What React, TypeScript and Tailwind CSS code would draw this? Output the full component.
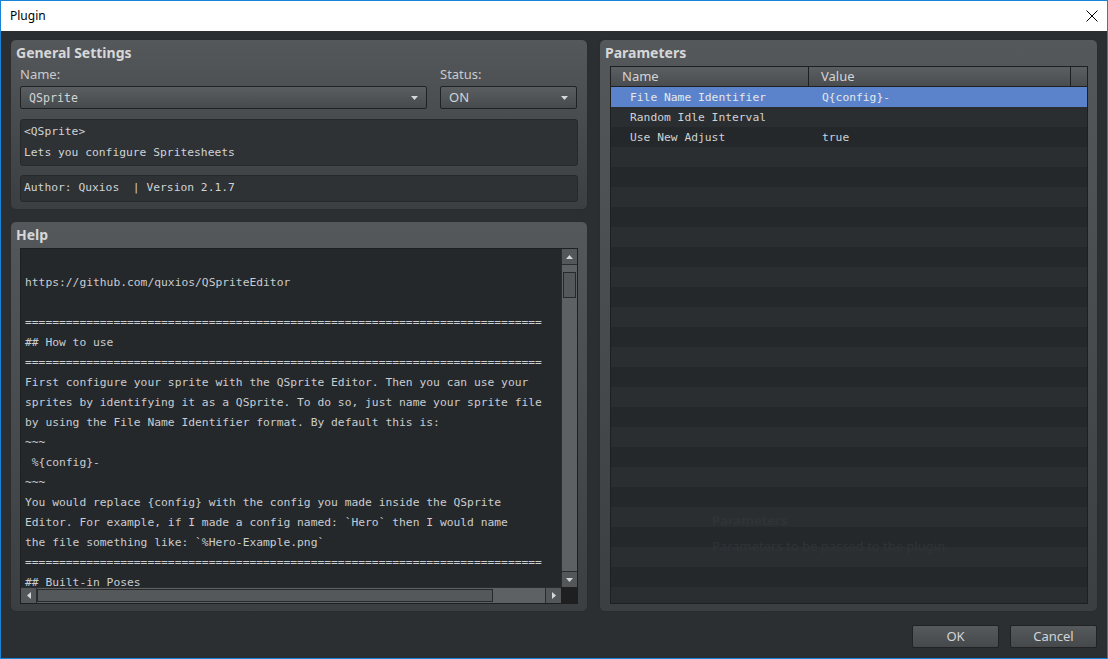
import React from 'react';

const helpLines = [
  '',
  'https://github.com/quxios/QSpriteEditor',
  '',
  '============================================================================',
  '## How to use',
  '============================================================================',
  'First configure your sprite with the QSprite Editor. Then you can use your',
  'sprites by identifying it as a QSprite. To do so, just name your sprite file',
  'by using the File Name Identifier format. By default this is:',
  '~~~',
  ' %{config}-',
  '~~~',
  'You would replace {config} with the config you made inside the QSprite',
  'Editor. For example, if I made a config named: `Hero` then I would name',
  'the file something like: `%Hero-Example.png`',
  '============================================================================',
  '## Built-in Poses',
  '',
];

const params = [
  { name: 'File Name Identifier', value: 'Q{config}-' },
  { name: 'Random Idle Interval', value: '' },
  { name: 'Use New Adjust', value: 'true' },
];

function Arrow({ dir }: { dir: 'up' | 'down' | 'left' | 'right' }) {
  const pts = {
    up: '0,4 3.5,0 7,4',
    down: '0,0 7,0 3.5,4',
    left: '4,0 4,7 0,3.5',
    right: '0,0 0,7 4,3.5',
  }[dir];
  const w = dir === 'up' || dir === 'down' ? 7 : 4;
  const h = dir === 'up' || dir === 'down' ? 4 : 7;
  return (
    <svg width={w} height={h} viewBox={`0 0 ${w} ${h}`}>
      <polygon points={pts} fill="#d4d6d8" />
    </svg>
  );
}

function Combo({ value, mono, width }: { value: string; mono?: boolean; width: string }) {
  return (
    <div
      className={`${width} h-[23px] rounded-[2px] border border-[#1f2123] bg-gradient-to-b from-[#5b5e61] to-[#474a4d] flex items-center justify-between pl-[8px] pr-[8px] text-[#d2d4d6]`}
    >
      <span className={mono ? "pt-[3px] font-['DejaVu_Sans_Mono',monospace] text-[11.6px]" : 'text-[13px]'}>{value}</span>
      <Arrow dir="down" />
    </div>
  );
}

function Panel({ title, className, children }: { title: string; className: string; children: React.ReactNode }) {
  return (
    <div
      className={`${className} rounded-[6px] border border-[#2a2c2e] bg-gradient-to-b from-[#55585b] to-[#3c3f42] flex flex-col`}
    >
      <div className="pt-[4px] pl-[5px] h-[22px] leading-[18px] text-[14px] font-bold text-[#d6d7d8]">{title}</div>
      {children}
    </div>
  );
}

export default function App() {
  return (
    <div className="w-[1108px] h-[659px] border border-[#1883d7] bg-[#2c2f32] flex flex-col overflow-hidden font-['Noto_Sans',sans-serif]">
      {/* title bar */}
      <div className="h-[30px] shrink-0 bg-white flex items-center justify-between pl-[9px] pr-[9px] text-[12px] text-black">
        <span>Plugin</span>
        <svg width="12" height="12" viewBox="0 0 12 12">
          <path d="M0.5 0.5 L11.5 11.5 M11.5 0.5 L0.5 11.5" stroke="#000" strokeWidth="1" />
        </svg>
      </div>

      <div className="flex-1 flex flex-col px-[9px] pt-[8px]">
        <div className="flex gap-[11px] h-[573px]">
          {/* left column */}
          <div className="w-[578px] flex flex-col gap-[11px]">
            <Panel title="General Settings" className="h-[171px]">
              <div className="px-[9px] flex flex-col">
                <div className="mt-[4px] flex gap-[13px] h-[16px] leading-[16px] text-[13px] text-[#c9cbcd]">
                  <span className="w-[407px]">Name:</span>
                  <span>Status:</span>
                </div>
                <div className="flex gap-[13px] mt-[4px]">
                  <Combo value="QSprite" mono width="w-[407px]" />
                  <Combo value="ON" width="w-[137px]" />
                </div>
                <div className="mt-[10px] h-[47px] rounded-[3px] border border-[#26282a] bg-[#2f3235] px-[3px] pt-[1px] font-['DejaVu_Sans_Mono',monospace] text-[11.3px] leading-[21px] text-[#cfd2d5]">
                  <div>&lt;QSprite&gt;</div>
                  <div>Lets you configure Spritesheets</div>
                </div>
                <div className="mt-[9px] h-[27px] rounded-[3px] border border-[#26282a] bg-[#2f3235] px-[3px] flex items-center font-['DejaVu_Sans_Mono',monospace] text-[11.3px] text-[#cfd2d5] whitespace-pre">
                  Author: Quxios  | Version 2.1.7
                </div>
              </div>
            </Panel>

            <Panel title="Help" className="flex-1">
              <div className="px-[9px] mt-[4px]">
                <div className="h-[356px] border border-[#1d1f21] bg-[#25282b] grid grid-cols-[1fr_16px] grid-rows-[1fr_16px]">
                  <div className="overflow-hidden pl-[4px] pt-[4px] font-['DejaVu_Sans_Mono',monospace] text-[11.3px] leading-[20px] text-[#c9ccd0] whitespace-pre">
                    {helpLines.map((l, i) => (
                      <div key={i} className="h-[20px]">{l}</div>
                    ))}
                  </div>
                  {/* vertical scrollbar */}
                  <div className="bg-[#5e6164] flex flex-col border-l border-[#2a2c2e]">
                    <div className="h-[16px] bg-[#54575a] border-b border-[#2a2c2e] flex items-center justify-center">
                      <Arrow dir="up" />
                    </div>
                    <div className="mt-[7px] mx-[1px] h-[26px] border border-[#26282a] bg-[#55585b]" />
                    <div className="flex-1" />
                    <div className="h-[16px] bg-[#54575a] border-t border-[#2a2c2e] flex items-center justify-center">
                      <Arrow dir="down" />
                    </div>
                  </div>
                  {/* horizontal scrollbar */}
                  <div className="bg-[#5e6164] flex border-t border-[#2a2c2e]">
                    <div className="w-[16px] bg-[#54575a] border-r border-[#2a2c2e] flex items-center justify-center">
                      <Arrow dir="left" />
                    </div>
                    <div className="w-[456px] my-[1px] border border-[#26282a] bg-[#55585b]" />
                    <div className="flex-1" />
                    <div className="w-[16px] bg-[#54575a] border-l border-[#2a2c2e] flex items-center justify-center">
                      <Arrow dir="right" />
                    </div>
                  </div>
                  <div className="bg-[#1d1f21]" />
                </div>
              </div>
            </Panel>
          </div>

          {/* right column */}
          <Panel title="Parameters" className="flex-1">
            <div className="pl-[10px] pr-[9px] mt-[4px]">
              <div className="relative h-[538px] border border-[#1d1f21] bg-[#25282a] overflow-hidden flex flex-col">
                <div className="h-[20px] shrink-0 flex border-b border-[#1d1f21] bg-gradient-to-b from-[#5c5f62] to-[#4a4d50] text-[13px] text-[#d2d4d6] leading-[19px]">
                  <div className="w-[198px] pl-[11px] border-r border-[#1d1f21]">Name</div>
                  <div className="w-[262px] pl-[12px] border-r border-[#1d1f21]">Value</div>
                  <div className="flex-1" />
                </div>
                {Array.from({ length: 26 }).map((_, i) => {
                  const p = params[i];
                  const bg = i === 0 ? 'bg-[#5a83cc]' : i % 2 === 1 ? 'bg-[#2b2e31]' : 'bg-[#25282a]';
                  return (
                    <div
                      key={i}
                      className={`h-[20px] shrink-0 flex pt-[2px] leading-[18px] font-['DejaVu_Sans_Mono',monospace] text-[11.3px] whitespace-pre ${bg} ${
                        i === 0 ? 'text-[#e6e8ea]' : 'text-[#cfd2d5]'
                      }`}
                    >
                      <div className="w-[199px] pl-[19px]">{p ? p.name : ''}</div>
                      <div className="pl-[12px]">{p ? p.value : ''}</div>
                    </div>
                  );
                })}
                <div className="absolute left-[101px] top-[444px] text-[#303336]">
                  <div className="text-[13px] font-bold leading-[18px]">Parameters</div>
                  <div className="text-[13px] mt-[8px] leading-[18px]">Parameters to be passed to the plugin.</div>
                </div>
              </div>
            </div>
          </Panel>
        </div>

        <div className="flex justify-end gap-[11px] mt-[13px] pr-px">
          {['OK', 'Cancel'].map((t) => (
            <div
              key={t}
              className="w-[87px] h-[23px] rounded-[2px] border border-[#202224] bg-gradient-to-b from-[#575a5d] to-[#46494c] flex items-center justify-center text-[13px] text-[#d2d4d6]"
            >
              {t}
            </div>
          ))}
        </div>
      </div>
    </div>
  );
}
